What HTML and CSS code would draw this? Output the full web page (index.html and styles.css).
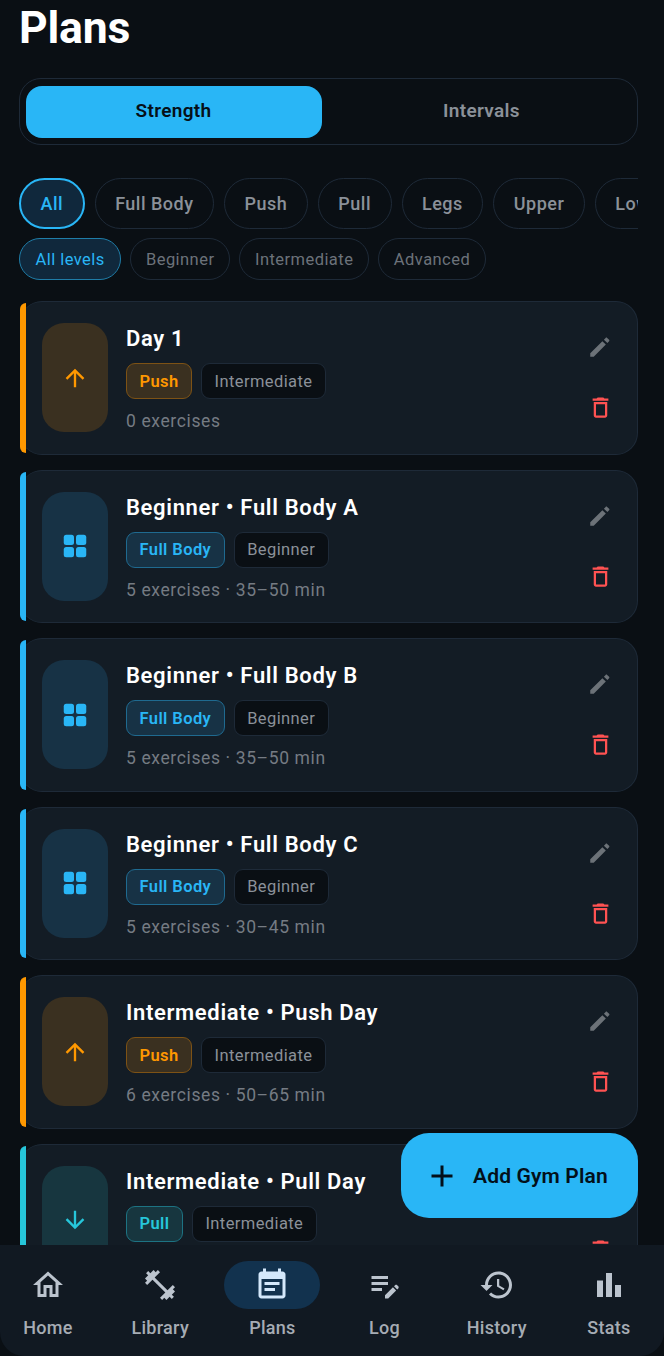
FILE: index.html
```html
<!DOCTYPE html>
<html lang="en">
<head>
<meta charset="utf-8">
<title>Plans</title>
<link rel="stylesheet" href="styles.css">
</head>
<body>
<svg class="defs" width="0" height="0" aria-hidden="true">
  <symbol id="i-edit" viewBox="0 0 24 24"><path d="M3 21v-3.2L14.2 6.6l3.2 3.2L6.2 21zM15.6 5.2l1.6-1.6c.4-.4 1-.4 1.4 0l1.8 1.8c.4.4.4 1 0 1.4l-1.6 1.6z"/></symbol>
  <symbol id="i-del" viewBox="0 0 24 24"><path d="M6 19c0 1.1.9 2 2 2h8c1.1 0 2-.9 2-2V7H6v12zM8 9h8v10H8V9zm7.5-5l-1-1h-5l-1 1H5v2h14V4z"/></symbol>
  <symbol id="i-up" viewBox="0 0 24 24"><path d="M4 12l1.41 1.41L11 7.83V20h2V7.83l5.58 5.59L20 12l-8-8-8 8z"/></symbol>
  <symbol id="i-down" viewBox="0 0 24 24"><path d="M20 12l-1.41-1.41L13 16.17V4h-2v12.17l-5.58-5.59L4 12l8 8 8-8z"/></symbol>
  <symbol id="i-grid" viewBox="0 0 24 24"><rect x="3" y="3" width="8.2" height="8.2" rx="2"/><rect x="12.8" y="3" width="8.2" height="8.2" rx="2"/><rect x="3" y="12.8" width="8.2" height="8.2" rx="2"/><rect x="12.8" y="12.8" width="8.2" height="8.2" rx="2"/></symbol>
</svg>
<div class="app">
  <h1 class="title">Plans</h1>
  <div class="segment">
    <button class="seg seg-on">Strength</button>
    <button class="seg">Intervals</button>
  </div>
  <div class="chips">
    <span class="chip chip-on">All</span>
    <span class="chip">Full Body</span>
    <span class="chip">Push</span>
    <span class="chip">Pull</span>
    <span class="chip">Legs</span>
    <span class="chip">Upper</span>
    <span class="chip">Lower</span>
  </div>
  <div class="levels">
    <span class="level level-on">All levels</span>
    <span class="level">Beginner</span>
    <span class="level">Intermediate</span>
    <span class="level">Advanced</span>
  </div>
  <div class="cards">
    <article class="card push">
      <div class="tile"><svg class="tile-icon"><use href="#i-up"/></svg></div>
      <div class="body">
        <h2 class="name">Day 1</h2>
        <div class="tags"><span class="tag tag-type">Push</span><span class="tag">Intermediate</span></div>
        <p class="meta">0 exercises</p>
      </div>
      <div class="actions"><svg class="act edit"><use href="#i-edit"/></svg><svg class="act del"><use href="#i-del"/></svg></div>
    </article>
    <article class="card full">
      <div class="tile"><svg class="tile-icon grid"><use href="#i-grid"/></svg></div>
      <div class="body">
        <h2 class="name">Beginner • Full Body A</h2>
        <div class="tags"><span class="tag tag-type">Full Body</span><span class="tag">Beginner</span></div>
        <p class="meta">5 exercises · 35–50 min</p>
      </div>
      <div class="actions"><svg class="act edit"><use href="#i-edit"/></svg><svg class="act del"><use href="#i-del"/></svg></div>
    </article>
    <article class="card full">
      <div class="tile"><svg class="tile-icon grid"><use href="#i-grid"/></svg></div>
      <div class="body">
        <h2 class="name">Beginner • Full Body B</h2>
        <div class="tags"><span class="tag tag-type">Full Body</span><span class="tag">Beginner</span></div>
        <p class="meta">5 exercises · 35–50 min</p>
      </div>
      <div class="actions"><svg class="act edit"><use href="#i-edit"/></svg><svg class="act del"><use href="#i-del"/></svg></div>
    </article>
    <article class="card full">
      <div class="tile"><svg class="tile-icon grid"><use href="#i-grid"/></svg></div>
      <div class="body">
        <h2 class="name">Beginner • Full Body C</h2>
        <div class="tags"><span class="tag tag-type">Full Body</span><span class="tag">Beginner</span></div>
        <p class="meta">5 exercises · 30–45 min</p>
      </div>
      <div class="actions"><svg class="act edit"><use href="#i-edit"/></svg><svg class="act del"><use href="#i-del"/></svg></div>
    </article>
    <article class="card push">
      <div class="tile"><svg class="tile-icon"><use href="#i-up"/></svg></div>
      <div class="body">
        <h2 class="name">Intermediate • Push Day</h2>
        <div class="tags"><span class="tag tag-type">Push</span><span class="tag">Intermediate</span></div>
        <p class="meta">6 exercises · 50–65 min</p>
      </div>
      <div class="actions"><svg class="act edit"><use href="#i-edit"/></svg><svg class="act del"><use href="#i-del"/></svg></div>
    </article>
    <article class="card pull">
      <div class="tile"><svg class="tile-icon"><use href="#i-down"/></svg></div>
      <div class="body">
        <h2 class="name">Intermediate • Pull Day</h2>
        <div class="tags"><span class="tag tag-type">Pull</span><span class="tag">Intermediate</span></div>
        <p class="meta">6 exercises · 50–65 min</p>
      </div>
      <div class="actions"><svg class="act edit"><use href="#i-edit"/></svg><svg class="act del"><use href="#i-del"/></svg></div>
    </article>
  </div>
  <button class="fab">
    <svg class="fab-icon" viewBox="0 0 24 24"><path d="M19 13h-6v6h-2v-6H5v-2h6V5h2v6h6v2z"/></svg>
    <span>Add Gym Plan</span>
  </button>
  <nav class="nav">
    <div class="nav-item"><span class="nav-pill"><svg class="nav-icon" viewBox="0 0 24 24"><path d="M12 5.69l5 4.5V18h-2v-6H9v6H7v-7.81l5-4.5M12 3L2 12h3v8h6v-6h2v6h6v-8h3L12 3z"/></svg></span><span class="nav-label">Home</span></div>
    <div class="nav-item"><span class="nav-pill"><svg class="nav-icon" viewBox="0 0 24 24"><path d="M20.57 14.86L22 13.43 20.57 12 17 15.57 8.43 7 12 3.43 10.57 2 9.14 3.43 7.71 2 5.57 4.14 4.14 2.71 2.71 4.14l1.43 1.43L2 7.71l1.43 1.43L2 10.57 3.43 12 7 8.43 15.57 17 12 20.57 13.43 22l1.43-1.43L16.29 22l2.14-2.14 1.43 1.43 1.43-1.43-1.43-1.43L22 16.29z"/></svg></span><span class="nav-label">Library</span></div>
    <div class="nav-item nav-on"><span class="nav-pill"><svg class="nav-icon" viewBox="0 0 24 24"><path d="M17 10H7v2h10v-2zm2-7h-1V1h-2v2H8V1H6v2H5c-1.11 0-1.99.9-1.99 2L3 19c0 1.1.89 2 2 2h14c1.1 0 2-.9 2-2V5c0-1.1-.9-2-2-2zm0 16H5V8h14v11zm-5-5H7v2h7v-2z"/></svg></span><span class="nav-label">Plans</span></div>
    <div class="nav-item"><span class="nav-pill"><svg class="nav-icon" viewBox="0 0 24 24"><path d="M3 10h11v2H3zm0-2h11V6H3zm0 8h7v-2H3zm15.01-3.13l.71-.71c.39-.39 1.02-.39 1.41 0l.71.71c.39.39.39 1.02 0 1.41l-.71.71zm-.71.71l-5.3 5.3V21h2.12l5.3-5.3z"/></svg></span><span class="nav-label">Log</span></div>
    <div class="nav-item"><span class="nav-pill"><svg class="nav-icon" viewBox="0 0 24 24"><path d="M13 3c-4.97 0-9 4.03-9 9H1l3.89 3.89.07.14L9 12H6c0-3.87 3.13-7 7-7s7 3.13 7 7-3.13 7-7 7c-1.93 0-3.68-.79-4.94-2.06l-1.42 1.42C8.27 19.99 10.51 21 13 21c4.97 0 9-4.03 9-9s-4.03-9-9-9zm-1 5v5l4.28 2.54.72-1.21-3.5-2.08V8H12z"/></svg></span><span class="nav-label">History</span></div>
    <div class="nav-item"><span class="nav-pill"><svg class="nav-icon" viewBox="0 0 24 24"><path d="M4 9h4v11H4zm6-5h4v16h-4zm6 8h4v8h-4z"/></svg></span><span class="nav-label">Stats</span></div>
  </nav>
</div>
</body>
</html>
```

FILE: styles.css
```css
* { box-sizing: border-box; }
html, body { margin: 0; padding: 0; height: 100%; overflow: hidden; }
body { background: #000; font-family: Roboto, "Noto Sans", sans-serif; }
.defs { position: absolute; }
.app {
  position: relative;
  width: 664px;
  height: 1356px;
  overflow: hidden;
  background: #0a0f14;
  padding: 0 26px 0 19px;
}
.title {
  margin: 0;
  height: 78px;
  padding-top: 3px;
  font-size: 44.5px;
  line-height: 50px;
  font-weight: 700;
  letter-spacing: -0.2px;
  color: #fff;
}
.segment {
  display: flex;
  gap: 11px;
  height: 67px;
  padding: 6.5px;
  padding-left: 5.5px;
  border: 1.5px solid #1e2a38;
  border-radius: 22px;
}
.seg {
  flex: 1;
  border: 0;
  border-radius: 16px;
  background: transparent;
  font: 600 19px/24px Roboto, sans-serif;
  letter-spacing: 0.32px;
  color: #8b9199;
  padding: 0 0 2px;
}
.seg-on { flex: none; width: 296px; background: #29b6f6; color: #061018; }
.chips {
  display: flex;
  gap: 10px;
  margin-top: 33px;
  height: 51px;
  overflow: hidden;
}
.chip {
  flex: none;
  display: flex;
  align-items: center;
  padding: 0 19.5px;
  border: 1.5px solid #1e2a38;
  border-radius: 26px;
  font-size: 18px;
  font-weight: 500;
  letter-spacing: 0.5px;
  color: #8b9199;
}
.chip-on { background: #10283c; border: 2px solid #29b6f6; color: #29b6f6; }
.levels { display: flex; gap: 9px; margin-top: 9px; height: 42px; }
.level {
  display: flex;
  align-items: center;
  padding: 0 14.75px;
  border: 1.5px solid #1e2a38;
  border-radius: 21px;
  font-size: 16.5px;
  letter-spacing: 0.45px;
  color: #6c727a;
}
.level-on { padding: 0 15.5px; background: #10283c; border-color: #1f7da8; color: #29b6f6; }
.cards { display: flex; flex-direction: column; gap: 15px; margin-top: 21px; margin-left: 1px; }
.card {
  position: relative;
  flex: none;
  display: flex;
  align-items: stretch;
  height: 153.5px;
  padding: 21px 24px 21px 22px;
  background: #131c25;
  border: 1.5px solid #1e2a38;
  border-left: 0;
  border-radius: 22px;
}
.card::before {
  content: "";
  position: absolute;
  left: 0;
  top: 1px;
  bottom: 1px;
  width: 6px;
  border-radius: 6px 0 0 6px;
  background: var(--accent);
}
.push { --accent: #ff9800; --tile: #3a3020; --tag-border: #7d5215; }
.full { --accent: #29b6f6; --tile: #173245; --tag-border: #1f6a90; }
.pull { --accent: #26c6da; --tile: #17363f; --tag-border: #1d7383; }
.tile {
  flex: none;
  display: flex;
  align-items: center;
  justify-content: center;
  width: 66px;
  height: 109px;
  border-radius: 22px;
  background: var(--tile);
}
.tile-icon { width: 28px; height: 28px; fill: var(--accent); }
.tile-icon.grid { width: 30px; height: 30px; }
.body { flex: 1; min-width: 0; margin-left: 18px; }
.name {
  margin: 0;
  height: 40px;
  padding-top: 2px;
  font-size: 22px;
  line-height: 28px;
  font-weight: 600;
  letter-spacing: 0.66px;
  color: #fff;
}
.tags { display: flex; gap: 9px; }
.tag {
  display: flex;
  align-items: center;
  height: 36px;
  padding: 0 12.5px;
  background: #0a0f14;
  border: 1.5px solid #1e2a38;
  border-radius: 9px;
  font-size: 16.5px;
  letter-spacing: 0.4px;
  color: #8b9199;
}
.tag-type {
  background: var(--tile);
  border-color: var(--tag-border);
  color: var(--accent);
  font-weight: 600;
}
.meta {
  margin: 10px 0 0;
  font-size: 17.5px;
  line-height: 24px;
  letter-spacing: 0.62px;
  color: #757b83;
}
.actions {
  flex: none;
  display: flex;
  flex-direction: column;
  align-items: center;
  gap: 34px;
  padding-top: 11px;
  width: 26px;
}
.act { flex: none; width: 26px; height: 26px; }
.del { width: 27px; height: 27px; }
.edit { fill: #6c7278; }
.del { fill: #ff5252; }
.fab {
  position: absolute;
  left: 401px;
  top: 1133px;
  display: flex;
  align-items: center;
  gap: 13px;
  width: 237px;
  height: 85px;
  padding: 0 0 0 23px;
  border: 0;
  border-radius: 28px;
  background: #29b6f6;
  font: 600 21px/28px Roboto, sans-serif;
  letter-spacing: 0.15px;
  color: #03101a;
}
.fab-icon { width: 36px; height: 36px; fill: #03101a; flex: none; }
.nav {
  position: absolute;
  left: 0;
  right: 0;
  bottom: 0;
  display: grid;
  grid-template-columns: repeat(6, 112.2px);
  justify-content: center;
  height: 111px;
  padding: 16px 7px 0 0;
  background: #111922;
  border-radius: 0 0 24px 24px;
}
.nav-item { display: flex; flex-direction: column; align-items: center; gap: 5px; }
.nav-pill {
  display: flex;
  align-items: center;
  justify-content: center;
  width: 96px;
  height: 48px;
  border-radius: 24px;
}
.nav-icon { width: 36px; height: 36px; fill: #bcc4ce; }
.nav-label { font-size: 18px; line-height: 28px; font-weight: 500; letter-spacing: 0.3px; color: #a6acb4; }
.nav-on .nav-pill { background: #12324e; }
.nav-on .nav-icon { fill: #d4e8fb; }
```
